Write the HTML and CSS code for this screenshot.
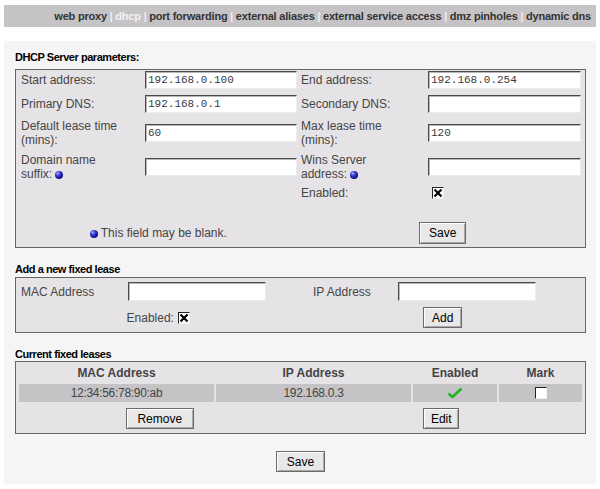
FILE: index.html
```html
<!DOCTYPE html>
<html>
<head>
<meta charset="utf-8">
<title>DHCP</title>
<link rel="stylesheet" href="styles.css">
</head>
<body>
<div class="nav">
  <span class="nav-link">web proxy</span><span class="sep"> | </span><span class="nav-link active">dhcp</span><span class="sep"> | </span><span class="nav-link">port forwarding</span><span class="sep"> | </span><span class="nav-link">external aliases</span><span class="sep"> | </span><span class="nav-link">external service access</span><span class="sep"> | </span><span class="nav-link">dmz pinholes</span><span class="sep"> | </span><span class="nav-link">dynamic dns</span>
</div>

<div class="panel">
  <div class="title title-dhcp">DHCP Server parameters:</div>
  <div class="box box-dhcp">
    <div class="grid4 row-1">
      <div class="lbl">Start address:</div>
      <div class="fld"><input class="text" type="text" value="192.168.0.100"></div>
      <div class="lbl lbl-right">End address:</div>
      <div class="fld"><input class="text" type="text" value="192.168.0.254"></div>
    </div>
    <div class="grid4 row-2">
      <div class="lbl">Primary DNS:</div>
      <div class="fld"><input class="text" type="text" value="192.168.0.1"></div>
      <div class="lbl lbl-right">Secondary DNS:</div>
      <div class="fld"><input class="text" type="text" value=""></div>
    </div>
    <div class="grid4 row-3">
      <div class="lbl">Default lease time<br>(mins):</div>
      <div class="fld"><input class="text" type="text" value="60"></div>
      <div class="lbl lbl-right">Max lease time<br>(mins):</div>
      <div class="fld"><input class="text" type="text" value="120"></div>
    </div>
    <div class="grid4 row-4">
      <div class="lbl">Domain name<br>suffix: <span class="dot"></span></div>
      <div class="fld"><input class="text" type="text" value=""></div>
      <div class="lbl lbl-right">Wins Server<br>address: <span class="dot"></span></div>
      <div class="fld"><input class="text" type="text" value=""></div>
    </div>
    <div class="grid4 row-5">
      <div class="lbl"></div>
      <div class="fld"></div>
      <div class="lbl lbl-right">Enabled:</div>
      <div class="fld"><span class="check check-on check-indent"><svg width="10" height="10" viewBox="0 0 10 10"><path d="M1.5 1.5 L8.5 8.5 M8.5 1.5 L1.5 8.5" stroke="#000" stroke-width="2.2" fill="none"/></svg></span></div>
    </div>
    <div class="halves row-6">
      <div class="half"><span class="note"><span class="dot"></span> This field may be blank.</span></div>
      <div class="half half-right"><button class="btn btn-save">Save</button></div>
    </div>
  </div>

  <div class="title title-add">Add a new fixed lease</div>
  <div class="box box-add">
    <div class="grid-add add-row-1">
      <div class="lbl">MAC Address</div>
      <div class="fld"><input class="text text-tall" type="text" value=""></div>
      <div class="lbl lbl-ip">IP Address</div>
      <div class="fld"><input class="text text-tall" type="text" value=""></div>
    </div>
    <div class="halves add-row-2">
      <div class="half"><span class="lbl">Enabled:</span><span class="check check-on check-gap"><svg width="10" height="10" viewBox="0 0 10 10"><path d="M1.5 1.5 L8.5 8.5 M8.5 1.5 L1.5 8.5" stroke="#000" stroke-width="2.2" fill="none"/></svg></span></div>
      <div class="half half-right"><button class="btn btn-add">Add</button></div>
    </div>
  </div>

  <div class="title title-current">Current fixed leases</div>
  <div class="box box-current">
    <div class="lease-grid lease-head">
      <div class="th">MAC Address</div>
      <div class="th">IP Address</div>
      <div class="th">Enabled</div>
      <div class="th">Mark</div>
    </div>
    <div class="lease-grid lease-row">
      <div class="td">12:34:56:78:90:ab</div>
      <div class="td">192.168.0.3</div>
      <div class="td"><svg class="tick" width="16" height="12" viewBox="0 0 16 12"><path d="M1.5 6.5 L5.5 10 L14.5 1.5" stroke="#22b422" stroke-width="2.6" fill="none" stroke-linejoin="round"/></svg></div>
      <div class="td"><span class="check"></span></div>
    </div>
    <div class="halves lease-actions">
      <div class="half"><button class="btn btn-remove">Remove</button></div>
      <div class="half half-right"><button class="btn btn-edit">Edit</button></div>
    </div>
  </div>

  <div class="final">
    <button class="btn btn-final">Save</button>
  </div>
</div>
</body>
</html>
```

FILE: styles.css
```css
* {
  box-sizing: border-box;
}

body {
  margin: 0;
  padding: 5px 4px 0;
  background: #ffffff;
  font-family: "Liberation Sans", Arial, sans-serif;
  font-size: 12px;
  color: #444444;
}

/* top navigation */
.nav {
  height: 22px;
  background: #c6c3c6;
  display: flex;
  justify-content: flex-end;
  align-items: center;
  padding-right: 5px;
  font-size: 11px;
  font-weight: bold;
  letter-spacing: -0.2px;
  color: #333333;
  white-space: pre;
}

.nav .sep {
  color: #ffffff;
  font-weight: normal;
}

.nav .active {
  color: #f2f2f2;
}

/* main panel */
.panel {
  margin-top: 14px;
  background: #f5f5f5;
  padding: 9px 10px 12px 11px;
}

.title {
  font-size: 11px;
  font-weight: bold;
  line-height: 14px;
  color: #000000;
  letter-spacing: -0.45px;
}

.title-dhcp {
  margin-bottom: 5px;
}

.title-add {
  margin-top: 14px;
  margin-bottom: 1px;
}

.title-current {
  margin-top: 14px;
}

.box {
  border: 1px solid #666666;
  background: #e6e3e6;
}

.lbl {
  line-height: 14px;
  color: #454545;
}

.lbl-right {
  padding-left: 4px;
}

/* DHCP parameters */
.box-dhcp {
  padding: 0 4px 3px 5px;
}

.grid4 {
  display: grid;
  grid-template-columns: 124px 152px 131px 153px;
  align-items: center;
}

.row-1 { height: 20px; }
.row-2 { height: 20px; margin-top: 4px; }
.row-3 { height: 28px; margin-top: 5px; }
.row-4 { height: 28px; margin-top: 6px; }
.row-5 { height: 16px; margin-top: 4px; }
.row-6 { height: 22px; margin-top: 21px; }

.fld {
  display: flex;
  align-items: center;
}

.text {
  display: block;
  width: 100%;
  height: 18px;
  margin: 0;
  padding: 0 2px;
  background: #ffffff;
  border: 1px solid;
  border-color: #4a4a4a #ececec #ececec #4a4a4a;
  box-shadow: inset 1px 1px 0 #b8b8b8;
  font-family: "Liberation Mono", "Courier New", monospace;
  font-size: 11px;
  color: #3a3a3a;
  outline: none;
}

.text-tall {
  height: 19px;
}

.dot {
  display: inline-block;
  width: 8px;
  height: 8px;
  border-radius: 50%;
  background: radial-gradient(circle at 35% 30%, #a8b8ff 0, #3a3ad8 30%, #14148c 65%, #000030 100%);
  vertical-align: -1px;
}

.check {
  display: inline-flex;
  align-items: center;
  justify-content: center;
  width: 12px;
  height: 12px;
  background: #ffffff;
  border-top: 1px solid #222222;
  border-left: 1px solid #222222;
  border-right: 1px solid #f0f0f0;
  border-bottom: 1px solid #f0f0f0;
}

.check-indent {
  margin-left: 4px;
}

.check-gap {
  margin-left: 4px;
}

/* split rows */
.halves {
  display: grid;
  grid-template-columns: 1fr 1fr;
  align-items: center;
}

.box-dhcp .halves,
.box-add .halves {
  margin-left: -5px;
  margin-right: -4px;
}

.half {
  display: flex;
  justify-content: center;
  align-items: center;
}

.note {
  color: #454545;
  line-height: 14px;
}

/* buttons */
.btn {
  height: 21px;
  padding: 0;
  background: #e8e8e8;
  border: 1px solid #6a6a6a;
  box-shadow: inset 1px 1px 0 #ffffff, inset -1px -1px 0 #a8a8a8;
  font-family: "Liberation Sans", Arial, sans-serif;
  font-size: 12px;
  color: #000000;
}

.btn-save { width: 47px; height: 22px; }
.btn-add { width: 39px; }
.btn-remove { width: 68px; }
.btn-edit { width: 36px; }
.btn-final { width: 49px; }

/* add lease */
.box-add {
  padding: 0 4px 4px 5px;
}

.grid-add {
  display: grid;
  grid-template-columns: 107px 138px 132px 138px;
  align-items: center;
}

.lbl-ip {
  padding-left: 47px;
}

.add-row-1 {
  height: 21px;
  margin-top: 3px;
}

.add-row-2 {
  height: 21px;
  margin-top: 5px;
}

/* current leases */
.box-current {
  padding: 0 3px 4px 3px;
}

.lease-grid {
  display: grid;
  grid-template-columns: 195px 195px 84px 83px;
  column-gap: 2px;
}

.lease-head {
  height: 19px;
  margin-top: 1px;
}

.th {
  display: flex;
  align-items: center;
  justify-content: center;
  font-weight: bold;
  color: #444444;
}

.lease-row {
  height: 18px;
  margin-top: 2px;
}

.td {
  display: flex;
  align-items: center;
  justify-content: center;
  background: #c6c3c6;
  font-size: 12px;
  letter-spacing: -0.3px;
  color: #454545;
}

.lease-actions {
  height: 21px;
  margin-top: 6px;
}

.final {
  margin-top: 17px;
  display: flex;
  justify-content: center;
}
```
